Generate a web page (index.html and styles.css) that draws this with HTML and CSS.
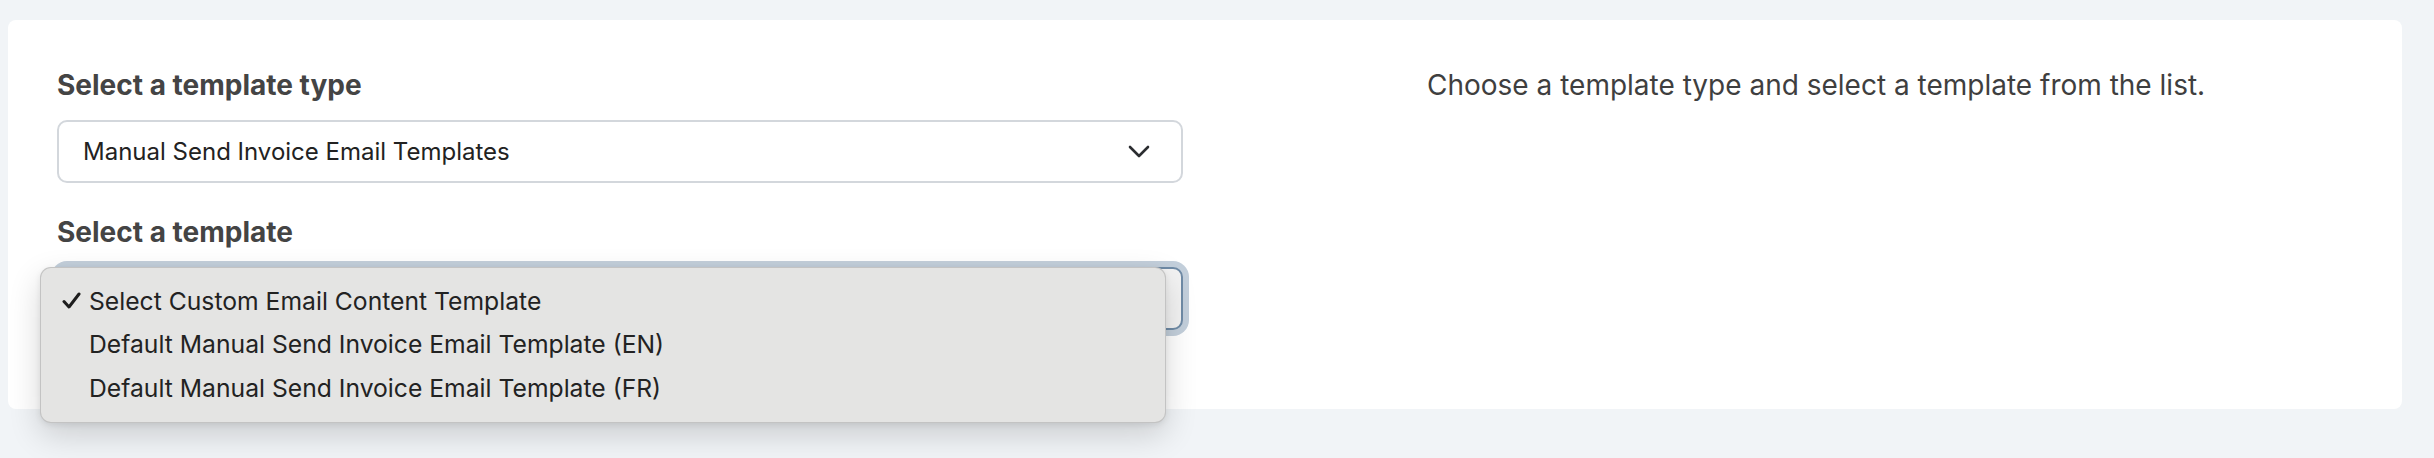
FILE: index.html
```html
<!DOCTYPE html>
<html lang="en">
<head>
<meta charset="utf-8">
<title>Email templates</title>
<link rel="stylesheet" href="styles.css">
</head>
<body>
<main class="card">
  <section class="form-col">
    <label class="field-label">Select a template type</label>
    <div class="select">
      <span class="select-value">Manual Send Invoice Email Templates</span>
      <svg class="chevron" width="22" height="13" viewBox="0 0 22 13"><path d="M2 2 L11 11 L20 2" fill="none" stroke="#2b2d30" stroke-width="2.6" stroke-linecap="round" stroke-linejoin="round"/></svg>
    </div>
    <label class="field-label second">Select a template</label>
    <div class="select-wrap">
      <div class="select focused"></div>
      <ul class="menu">
        <li class="menu-item"><span class="check"><svg width="19" height="17" viewBox="0 0 19 17"><path d="M2 9.5 L7 15 L17 2" fill="none" stroke="#1d1d1d" stroke-width="3" stroke-linecap="round" stroke-linejoin="round"/></svg></span>Select Custom Email Content Template</li>
        <li class="menu-item"><span class="check"></span>Default Manual Send Invoice Email Template (EN)</li>
        <li class="menu-item"><span class="check"></span>Default Manual Send Invoice Email Template (FR)</li>
      </ul>
    </div>
  </section>
  <p class="hint">Choose a template type and select a template from the list.</p>
</main>
</body>
</html>
```

FILE: styles.css
```css
html, body {
  margin: 0;
  padding: 0;
}
body {
  background: #f1f4f7;
  padding: 20px 32px 49px 8px;
  font-family: Inter, "Noto Sans", "Liberation Sans", sans-serif;
}
.card {
  background: #ffffff;
  border-radius: 8px;
  height: 389px;
  box-sizing: border-box;
  padding: 47px 48px 0 49px;
  display: grid;
  grid-template-columns: 1126px 1fr;
  column-gap: 244px;
  align-items: start;
}
.form-col {
  display: flex;
  flex-direction: column;
}
.field-label {
  font-size: 28px;
  line-height: 36px;
  font-weight: 700;
  color: #444444;
  margin: 0 0 17px;
  display: block;
}
.field-label.second {
  margin-top: 31px;
}
.select {
  height: 63px;
  box-sizing: border-box;
  border: 2px solid #d3d7dc;
  border-radius: 10px;
  padding: 0 31px 0 24px;
  display: flex;
  align-items: center;
  justify-content: space-between;
  font-size: 24px;
  color: #222222;
  background: #ffffff;
}
.select-wrap {
  position: relative;
}
.select.focused {
  border-color: #6f8ba6;
  background: #f3f3f3;
  box-shadow: 0 0 0 6px #c3cfdb;
}
.menu {
  position: absolute;
  left: -17px;
  top: 0;
  width: 1126px;
  margin: 0;
  padding: 11px 0 12px 21px;
  box-sizing: border-box;
  list-style: none;
  background: #e4e4e3;
  border: 1px solid rgba(0, 0, 0, 0.14);
  border-radius: 11px;
  box-shadow: 0 12px 32px rgba(0, 0, 0, 0.16), 0 2px 6px rgba(0, 0, 0, 0.08);
}
.menu-item {
  display: flex;
  align-items: center;
  height: 43.5px;
  font-size: 24.7px;
  color: #222222;
}
.check {
  width: 27px;
  flex: none;
  display: flex;
  align-items: center;
}
.hint {
  margin: 0;
  font-size: 28px;
  line-height: 36px;
  color: #3f3f3f;
}
```
